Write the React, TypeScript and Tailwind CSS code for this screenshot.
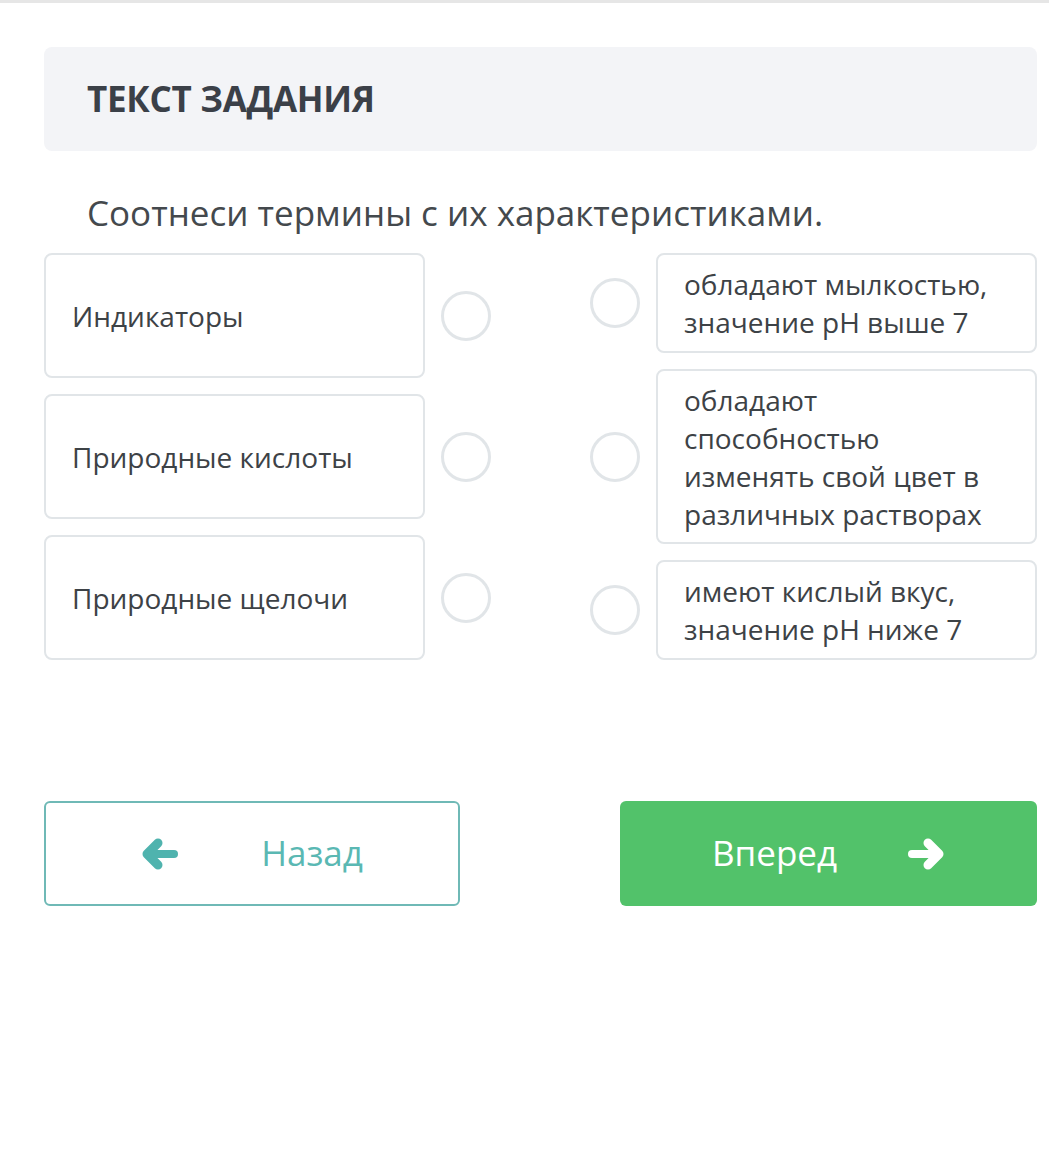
const terms = ["Индикаторы", "Природные кислоты", "Природные щелочи"]

const defs = [
  { text: "обладают мылкостью, значение pH выше 7", h: "h-[100px]" },
  { text: "обладают способностью изменять свой цвет в различных растворах", h: "h-[175px]" },
  { text: "имеют кислый вкус, значение pH ниже 7", h: "h-[100px]" },
]

function Dot() {
  return <div className="h-[50px] w-[50px] shrink-0 rounded-full border-[3px] border-[#e1e5e8] bg-white" />
}

// thick rounded arrow, like the font icon in the original
function Arrow({ dir, className }: { dir: "left" | "right"; className?: string }) {
  return (
    <svg
      viewBox="0 0 38 32"
      className={className}
      fill="none"
      stroke="currentColor"
      strokeLinecap="round"
      strokeLinejoin="round"
      style={dir === "right" ? { transform: "scaleX(-1)" } : undefined}
    >
      <path d="M17 5 L6 16 L17 27" strokeWidth="9" />
      <path d="M8 16 H33" strokeWidth="8" />
    </svg>
  )
}

export default function App() {
  return (
    <div className="min-h-[1155px] w-[1049px] bg-white font-['Open_Sans',sans-serif] text-[#3d4246]">
      <div className="h-[3px] bg-[#e6e6e6]" />

      <div className="pl-[44px] pr-[12px] pt-[44px]">
        <div className="flex h-[104px] items-center rounded-lg bg-[#f3f4f7] px-[43px]">
          <h2 className="text-[35px] font-bold tracking-[-0.3px] text-[#3b4048]">ТЕКСТ ЗАДАНИЯ</h2>
        </div>

        <p className="mt-[40px] pl-[43px] text-[35px] leading-[44px] text-[#44494d]">
          Соотнеси термины с их характеристиками.
        </p>

        <div className="mt-[18px] flex justify-between">
          <div className="flex flex-col gap-[16px]">
            {terms.map((t) => (
              <div key={t} className="flex h-[125px] items-center gap-[16px]">
                <div className="flex h-full w-[381px] items-center rounded-lg border-2 border-[#e1e5e8] px-[26px] text-[28px]">
                  {t}
                </div>
                <Dot />
              </div>
            ))}
          </div>

          <div className="flex flex-col gap-[16px]">
            {defs.map((d) => (
              <div key={d.text} className={`flex items-center gap-[16px] ${d.h}`}>
                <Dot />
                <div className="flex h-full w-[381px] items-center rounded-lg border-2 border-[#e1e5e8] px-[26px] text-[28px] leading-[38px]">
                  {d.text}
                </div>
              </div>
            ))}
          </div>
        </div>

        <div className="mt-[141px] flex justify-between">
          <button className="flex h-[105px] w-[416px] items-center justify-center gap-[82px] rounded-md border-2 border-[#6fb9b6] bg-white text-[35px] text-[#5ab8b3]">
            <Arrow dir="left" className="h-[32px] w-[38px] text-[#4fb3ae]" />
            <span>Назад</span>
          </button>
          <button className="flex h-[105px] w-[417px] items-center justify-center gap-[70px] rounded-md bg-[#52c26a] text-[35px] text-white">
            <span>Вперед</span>
            <Arrow dir="right" className="h-[32px] w-[38px]" />
          </button>
        </div>
      </div>
    </div>
  )
}
